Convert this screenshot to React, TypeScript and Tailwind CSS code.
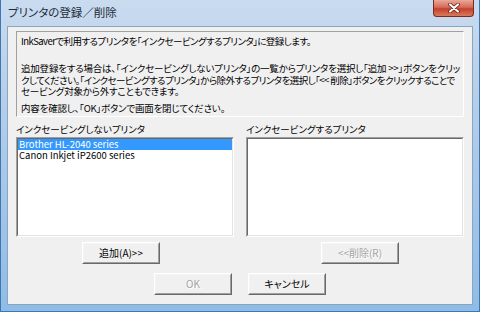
const jp = "font-['Noto_Sans_CJK_JP','Noto_Sans',sans-serif] [font-feature-settings:'palt']";

function Btn({ label, disabled = false }: { label: string; disabled?: boolean }) {
  return (
    <div className="h-[22px] w-[78px] border border-t-white border-l-white border-b-[#696969] border-r-[#696969]">
      <div className="flex h-full w-full items-center justify-center border border-t-[#f4f4f4] border-l-[#f4f4f4] border-b-[#a0a0a0] border-r-[#a0a0a0] bg-[#f0f0f0]">
        <span
          className={
            disabled
              ? "text-[10px] leading-none text-[#a3a3a3] [text-shadow:1px_1px_0_#ffffff]"
              : "text-[10px] leading-none text-black"
          }
        >
          {label}
        </span>
      </div>
    </div>
  );
}

function ListBox({ items }: { items: string[] }) {
  return (
    <div className="h-[100px] border border-t-[#a0a0a0] border-l-[#a0a0a0] border-b-white border-r-white">
      <div className="h-full border border-t-[#696969] border-l-[#696969] border-b-[#e3e3e3] border-r-[#e3e3e3] bg-white">
        {items.map((item, i) => (
          <div
            key={item}
            className={
              i === 0
                ? "h-[11px] bg-[#3399ff] pl-[1px] text-[9.5px] leading-[11px] text-white"
                : "h-[11px] pl-[1px] text-[9.5px] leading-[11px] text-black"
            }
          >
            {item}
          </div>
        ))}
      </div>
    </div>
  );
}

export default function App() {
  return (
    <div className={`relative flex h-[312px] w-[480px] flex-col overflow-hidden border border-t-0 border-[#3f76b4] bg-[linear-gradient(180deg,#c9dbef_0%,#b7cfe9_30%,#8fbce6_100%)] ${jp}`}>
      <div className="flex h-[26px] shrink-0 items-center pl-[7px] text-[11.5px] text-[#1e2a3a]">
        プリンタの登録／削除
      </div>
      <div className="absolute right-[5px] top-0 flex h-[17px] w-[41px] items-center justify-center rounded-b-[4px] border border-t-0 border-[#7a2a20] bg-[linear-gradient(180deg,#e9a898_0%,#d66a58_45%,#c4402c_55%,#d87a5c_100%)]">
        <svg width="12" height="10" viewBox="0 0 12 10">
          <path d="M2 1.5 L10 8.5 M10 1.5 L2 8.5" stroke="#5a1a12" strokeWidth="3.6" strokeLinecap="round" />
          <path d="M2 1.5 L10 8.5 M10 1.5 L2 8.5" stroke="#ffffff" strokeWidth="2.2" strokeLinecap="round" />
        </svg>
      </div>

      <div className="mx-[6px] flex h-[279px] flex-col border border-[#8aa4c4] bg-[#f0f0f0] text-black">
        <div className="ml-[8px] mt-[4px] h-[86px] w-[448px] border border-t-[#a0a0a0] border-l-[#a0a0a0] border-b-white border-r-white px-[4px] text-[9.5px] leading-[12px] tracking-[-0.2px]">
          <div className="mt-[3px] whitespace-nowrap tracking-[-0.55px]">
            InkSaverで利用するプリンタを「インクセービングするプリンタ」に登録します。
          </div>
          <div className="mt-[16px] whitespace-nowrap leading-[11.5px]">
            追加登録をする場合は、「インクセービングしないプリンタ」の一覧からプリンタを選択し「追加 &gt;&gt;」ボタンをクリッ
          </div>
          <div className="whitespace-nowrap leading-[11.5px] tracking-[-0.55px]">
            クしてください。「インクセービングするプリンタ」から除外するプリンタを選択し「&lt;&lt; 削除」ボタンをクリックすることで
          </div>
          <div className="whitespace-nowrap leading-[11.5px]">セービング対象から外すこともできます。</div>
          <div className="mt-[4px] whitespace-nowrap">内容を確認し、「OK」ボタンで画面を閉じてください。</div>
        </div>

        <div className="ml-[8px] mt-[6px] grid w-[448px] grid-cols-[218px_218px] gap-x-[12px]">
          <div className="text-[9.5px] leading-[12px]">インクセービングしないプリンタ</div>
          <div className="text-[9.5px] leading-[12px]">インクセービングするプリンタ</div>
          <div className="mt-[2px]">
            <ListBox items={["Brother HL-2040 series", "Canon Inkjet iP2600 series"]} />
          </div>
          <div className="mt-[2px]">
            <ListBox items={[]} />
          </div>
          <div className="mt-[5px] pl-[66px]">
            <Btn label="追加(A)>>" />
          </div>
          <div className="mt-[5px] pl-[75px]">
            <Btn label="<<削除(R)" disabled />
          </div>
        </div>

        <div className="ml-[146px] mt-[9px] flex gap-[16px]">
          <Btn label="OK" disabled />
          <Btn label="キャンセル" />
        </div>
      </div>
    </div>
  );
}
